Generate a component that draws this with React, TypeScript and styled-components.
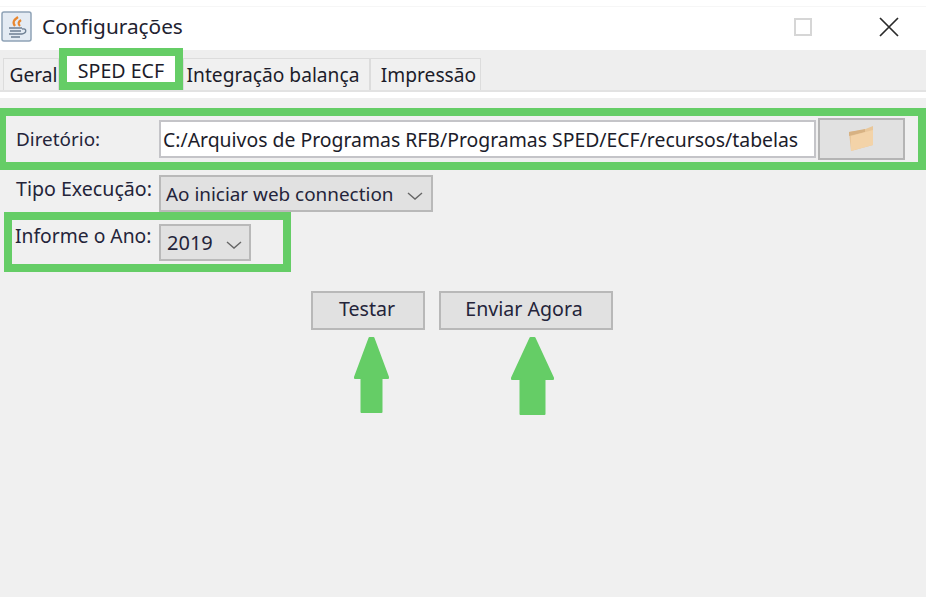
import React from "react";
import styled, { createGlobalStyle } from "styled-components";

const Global = createGlobalStyle`
  html, body { margin: 0; padding: 0; background: #fff; }
  body { font-family: "Noto Sans", "DejaVu Sans", sans-serif; color: #1c1c2a; }
`;
const GREEN = "#65cd66";

const Window = styled.div`
  width: 926px; height: 597px; overflow: hidden; background: #f0f0f0;
  display: flex; flex-direction: column;
`;
const TitleBar = styled.header`
  height: 50px; flex: none; box-sizing: border-box; background: #fff;
  display: flex; align-items: center; padding: 3px 0 0 1px;
  box-shadow: inset 0 6px 0 #fff, inset 0 7px 0 #f6f6f6;
`;
const AppIcon = styled.svg` width: 32px; height: 32px; flex: none; `;
const Title = styled.h1`
  margin: 0 0 1px 9px; font-size: 20.8px; font-weight: 400; flex: 1; color: #222230;
`;
const WinControl = styled.svg<{ $mr: number }>` flex: none; margin-right: ${p => p.$mr}px; `;
const TabStrip = styled.nav`
  height: 42px; flex: none; box-sizing: border-box; background: #eeeeee;
  display: flex; align-items: flex-end; padding-left: 3px;
  border-bottom: 2px solid #e2e2e2;
`;
const Tab = styled.div<{ $w: number; $pl?: number; $pr?: number }>`
  width: ${p => p.$w}px; height: 32px; box-sizing: border-box;
  padding: 0 ${p => p.$pr ?? 0}px 0 ${p => p.$pl ?? 0}px;
  border: 1px solid #dcdcdc; border-bottom: 0; background: #f0f0f0;
  display: flex; align-items: center; justify-content: center; font-size: 19.2px; white-space: nowrap;
`;
const ActiveTab = styled.div`
  width: 124px; height: 42px; box-sizing: border-box; border: 8px solid ${GREEN}; background: #fff;
  display: flex; align-items: center; justify-content: center; font-size: 19.6px; white-space: nowrap;
  padding-top: 3px; position: relative; z-index: 1; flex: none;
`;
const Divider = styled.div` height: 6px; flex: none; background: #fff; `;
const Panel = styled.main` flex: 1; display: flex; flex-direction: column; `;
const DirRow = styled.section`
  margin-top: 10px; height: 62px; box-sizing: border-box; border: 8px solid ${GREEN}; border-left-width: 6px;
  display: flex; align-items: center;
`;
const Label = styled.label`
  font-size: 19.3px; white-space: nowrap; flex: none; color: #24243a;
`;
const DirLabel = styled(Label)` width: 153px; padding-left: 10px; box-sizing: border-box; font-size: 18.9px; `;
const PathField = styled.div`
  width: 657px; height: 38px; box-sizing: border-box; border: 2px solid #c4c4c8; background: #fff;
  font-size: 19.4px; display: flex; align-items: center; padding-left: 2px; white-space: nowrap; overflow: hidden;
`;
const FolderButton = styled.button`
  width: 87px; height: 42px; margin-left: 2px; box-sizing: border-box; padding: 0;
  border: 2px solid #b4b4b4; background: #e1e1e1;
  display: flex; align-items: center; justify-content: center;
`;
const TypeRow = styled.div`
  display: flex; height: 37px; margin-top: 5px; padding-left: 16px;
`;
const TypeLabel = styled(Label)` width: 143px; font-size: 19.6px; `;
const Combo = styled.div<{ $w: number; $pl: number }>`
  width: ${p => p.$w}px; height: 37px; box-sizing: border-box; border: 2px solid #b9b9b9; background: #e1e1e1;
  display: flex; align-items: center; font-size: 18.9px; padding-left: ${p => p.$pl}px; color: #24243a; white-space: nowrap;
`;
const YearValue = styled.span` font-size: 20px; `;
const Chevron = styled.svg<{ $ml: number }>` margin: 4px 0 0 ${p => p.$ml}px; flex: none; `;
const YearRow = styled.section`
  width: 287px; height: 60px; box-sizing: border-box; margin: 0 0 0 4px; border: 8px solid ${GREEN};
  display: flex; padding: 4px 0 0 3px;
`;
const YearLabel = styled(Label)` width: 144px; margin-top: -2px; `;
const Actions = styled.div`
  display: flex; gap: 14px; margin: 19px 0 0 311px;
`;
const ActionCell = styled.div` position: relative; `;
const ActionButton = styled.button<{ $w: number; $pr: number }>`
  width: ${p => p.$w}px; height: 39px; box-sizing: border-box; padding: 0 ${p => p.$pr}px 4px 0;
  border: 2px solid #b8b8b8; background: #e1e1e1;
  font: 400 19.6px "Noto Sans", "DejaVu Sans", sans-serif; color: #24243a;
`;
const Arrow = styled.svg<{ $l: number }>`
  position: absolute; top: 46px; left: ${p => p.$l}px; display: block;
`;

const arrowPath = (w: number, h: number, shaft: number, head: number) => {
  const c = w / 2, s = shaft / 2;
  return `M${c - 2} 1 H${c + 2} L${w - 1} ${head - 1} V${head} H${c + s - 1} V${h - 1} H${c - s + 1} V${head} H1 V${head - 1} Z`;
};

const Down = ({ ml }: { ml: number }) => (
  <Chevron $ml={ml} width="16" height="8" viewBox="0 0 16 8" fill="none">
    <path d="M1 1 L8 7 L15 1" stroke="#666" strokeWidth="1.4" />
  </Chevron>
);

export default function App() {
  return (
    <Window>
      <Global />
      <TitleBar>
        <AppIcon viewBox="0 0 32 32">
          <rect x="1" y="1" width="29" height="29" rx="2" fill="#e4ebf3" stroke="#8ea2b6" strokeWidth="1.5" />
          <path d="M17 6c-4 3-6 5-3 9M20 9c-3 2-3 4-1 6" stroke="#e8862e" strokeWidth="2.2" fill="none" />
          <path d="M8 17h13M9 20h11M8 23h13M10 26h9" stroke="#6d7f93" strokeWidth="1.5" />
          <path d="M21 18c5-1 5 4 0 5" stroke="#6d7f93" strokeWidth="1.4" fill="none" />
        </AppIcon>
        <Title>Configurações</Title>
        <WinControl $mr={67} width="18" height="18" viewBox="0 0 18 18" fill="none">
          <rect x="1" y="1" width="16" height="16" stroke="#d6d6d6" strokeWidth="2" />
        </WinControl>
        <WinControl $mr={27} width="20" height="20" viewBox="0 0 20 20" fill="none">
          <path d="M1 1 L19 19 M19 1 L1 19" stroke="#2a2a2a" strokeWidth="1.7" />
        </WinControl>
      </TitleBar>
      <TabStrip>
        <Tab $w={56} $pl={5}>Geral</Tab>
        <ActiveTab>SPED ECF</ActiveTab>
        <Tab $w={187} $pr={7}>Integração balança</Tab>
        <Tab $w={111} $pl={6}>Impressão</Tab>
      </TabStrip>
      <Divider />
      <Panel>
        <DirRow>
          <DirLabel>Diretório:</DirLabel>
          <PathField>C:/Arquivos de Programas RFB/Programas SPED/ECF/recursos/tabelas</PathField>
          <FolderButton aria-label="Selecionar pasta">
            <svg width="28" height="28" viewBox="0 0 28 28">
              <path d="M1 7 L15 5 L25 1 V20 L3 26 Z" fill="#e9c79a" />
              <path d="M1 7 L17 4 L17 7 L1 11 Z" fill="#d7b283" />
              <path d="M3 11 L25 5 V20 L3 26 Z" fill="#f3d3a8" />
            </svg>
          </FolderButton>
        </DirRow>
        <TypeRow>
          <TypeLabel>Tipo Execução:</TypeLabel>
          <Combo $w={274} $pl={5}>Ao iniciar web connection<Down ml={14} /></Combo>
        </TypeRow>
        <YearRow>
          <YearLabel>Informe o Ano:</YearLabel>
          <Combo $w={92} $pl={6}><YearValue>2019</YearValue><Down ml={13} /></Combo>
        </YearRow>
        <Actions>
          <ActionCell>
            <ActionButton $w={114} $pr={2}>Testar</ActionButton>
            <Arrow $l={43} width="35" height="76" viewBox="0 0 35 76">
              <path d={arrowPath(35, 76, 22, 41)} fill={GREEN} stroke={GREEN} strokeWidth="2" strokeLinejoin="round" />
            </Arrow>
          </ActionCell>
          <ActionCell>
            <ActionButton $w={174} $pr={4}>Enviar Agora</ActionButton>
            <Arrow $l={72} width="43" height="78" viewBox="0 0 43 78">
              <path d={arrowPath(43, 78, 26, 42)} fill={GREEN} stroke={GREEN} strokeWidth="2" strokeLinejoin="round" />
            </Arrow>
          </ActionCell>
        </Actions>
      </Panel>
    </Window>
  );
}
